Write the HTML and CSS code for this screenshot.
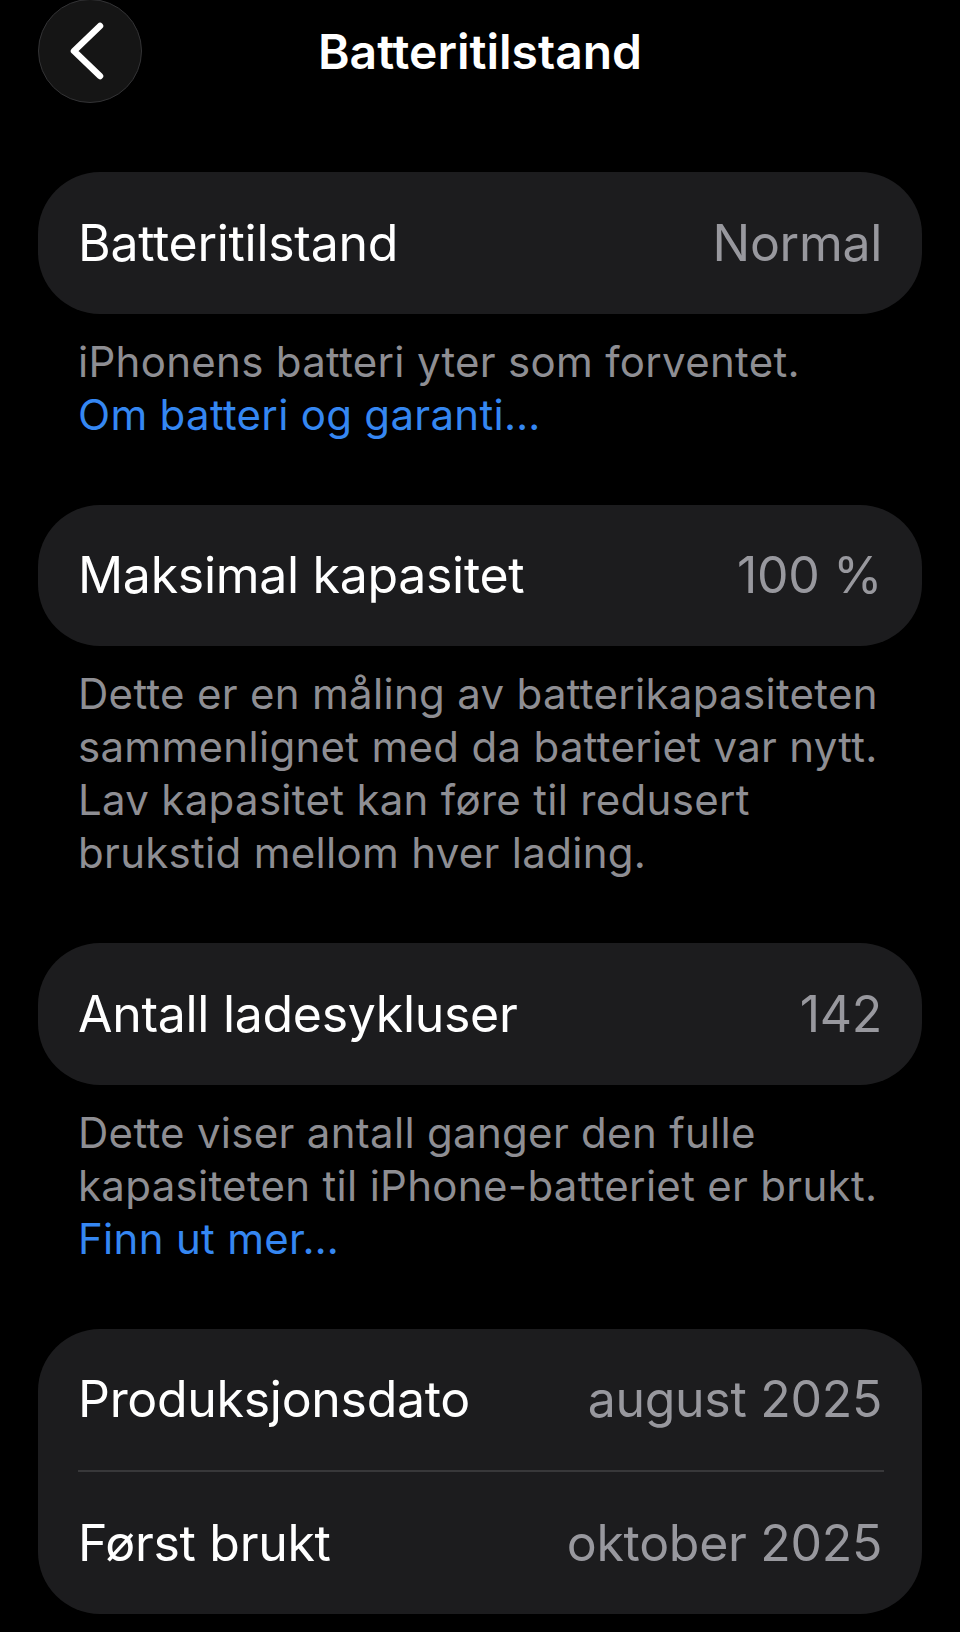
FILE: index.html
```html
<!DOCTYPE html>
<html lang="nb">
<head>
<meta charset="utf-8">
<title>Batteritilstand</title>
<link rel="stylesheet" href="styles.css">
</head>
<body>
<div class="screen">
  <header class="nav">
    <div class="nav-left">
      <button class="back" aria-label="Tilbake">
        <svg width="40" height="62" viewBox="0 0 40 62" aria-hidden="true">
          <path d="M33 6 L7 31 L33 56" fill="none" stroke="#fff" stroke-width="6.5" stroke-linecap="round" stroke-linejoin="round"/>
        </svg>
      </button>
    </div>
    <h1 class="title">Batteritilstand</h1>
    <div class="nav-right"></div>
  </header>

  <main class="content">
    <section class="group">
      <div class="card">
        <div class="row"><span class="label">Batteritilstand</span><span class="value">Normal</span></div>
      </div>
      <p class="foot">iPhonens batteri yter som forventet.<br><a class="link" href="#">Om batteri og garanti…</a></p>
    </section>

    <section class="group">
      <div class="card">
        <div class="row"><span class="label">Maksimal kapasitet</span><span class="value">100 %</span></div>
      </div>
      <p class="foot">Dette er en måling av batterikapasiteten<br>sammenlignet med da batteriet var nytt.<br>Lav kapasitet kan føre til redusert<br>brukstid mellom hver lading.</p>
    </section>

    <section class="group">
      <div class="card">
        <div class="row"><span class="label">Antall ladesykluser</span><span class="value">142</span></div>
      </div>
      <p class="foot">Dette viser antall ganger den fulle<br>kapasiteten til iPhone-batteriet er brukt.<br><a class="link" href="#">Finn ut mer…</a></p>
    </section>

    <section class="group">
      <div class="card">
        <div class="row"><span class="label">Produksjonsdato</span><span class="value">august 2025</span></div>
        <div class="sep"></div>
        <div class="row"><span class="label">Først brukt</span><span class="value">oktober 2025</span></div>
      </div>
    </section>
  </main>
</div>
</body>
</html>
```

FILE: styles.css
```css
* { box-sizing: border-box; }

html, body {
  margin: 0;
  padding: 0;
  background: #000;
}

body {
  font-family: Inter, "Noto Sans", "Liberation Sans", sans-serif;
  color: #fff;
  width: 960px;
  height: 1632px;
  overflow: hidden;
}

.screen {
  width: 960px;
}

.nav {
  display: grid;
  grid-template-columns: 1fr auto 1fr;
  align-items: center;
  height: 104px;
  padding: 0 38px;
}

.nav-left {
  display: flex;
  align-items: center;
}

.back {
  width: 104px;
  height: 104px;
  border-radius: 50%;
  background: #151515;
  border: 1.5px solid #333335;
  display: flex;
  align-items: center;
  justify-content: center;
  padding: 0 6px 0 0;
  margin-top: -2px;
}

.back svg { display: block; }

.title {
  margin: 0;
  font-size: 48px;
  font-weight: 600;
  letter-spacing: 0;
  line-height: 1;
  text-align: center;
}

.content {
  padding: 68px 38px 0 38px;
}

.group {
  margin-bottom: 64px;
}

.card {
  background: #1c1c1e;
  border-radius: 62px;
  padding: 0 40px;
}

.row {
  display: flex;
  align-items: center;
  justify-content: space-between;
  height: 141.5px;
  font-size: 50px;
  letter-spacing: -0.3px;
}

.label { color: #fff; }

.value { color: #98989e; }

.sep {
  height: 2px;
  background: #38383a;
  margin-right: -2px;
}

.foot {
  margin: 21px 0 0 0;
  padding: 0 40px;
  font-size: 42px;
  line-height: 53px;
  letter-spacing: 0.3px;
  color: #8e8e93;
}

.link {
  color: #3587f2;
  text-decoration: none;
}
```
